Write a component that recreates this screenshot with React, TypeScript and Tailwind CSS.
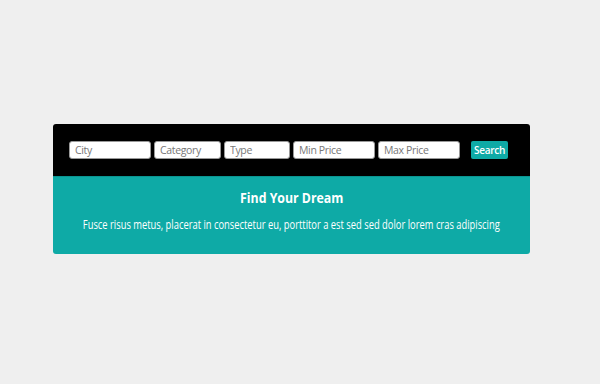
const fields = [
  { label: "City", w: "w-[82px]" },
  { label: "Category", w: "w-[67px]" },
  { label: "Type", w: "w-[66px]" },
  { label: "Min Price", w: "w-[82px]" },
  { label: "Max Price", w: "w-[82px]" },
];

const App = () => {
  return (
    <div
      className="w-full h-[384px] bg-[#efefef] pt-[124px] pl-[53px]"
      style={{ fontFamily: '"Open Sans", sans-serif' }}
    >
      <div className="w-[477px] rounded-[3px] overflow-hidden">
        <div className="bg-black h-[52px] flex items-center pl-[16px] pb-[1px]">
          <div className="flex items-center gap-[3px]">
            {fields.map((f) => (
              <input
                key={f.label}
                type="text"
                placeholder={f.label}
                className={`${f.w} h-[18px] bg-white rounded-[3px] border border-[#999] px-[5px] text-[10.5px] tracking-[-0.35px] text-[#555] placeholder:text-[#777] outline-none`}
              />
            ))}
          </div>
          <button className="ml-[11px] w-[37px] h-[18px] bg-[#0eaaa6] rounded-[2px] text-white text-[10px] tracking-[-0.3px] leading-[18px] font-semibold">
            Search
          </button>
        </div>
        <div className="bg-[#0eaaa6] border-t border-[#0b9591] h-[78px] flex flex-col items-center pt-[11px] text-white">
          <h1 className="text-[14px] leading-[20px] font-bold scale-x-[0.88] whitespace-nowrap">Find Your Dream</h1>
          <p className="mt-[9px] text-[12px] leading-[16px] scale-x-[0.78] whitespace-nowrap">
            Fusce risus metus, placerat in consectetur eu, porttitor a est sed sed dolor lorem cras adipiscing
          </p>
        </div>
      </div>
    </div>
  );
};

export default App;
